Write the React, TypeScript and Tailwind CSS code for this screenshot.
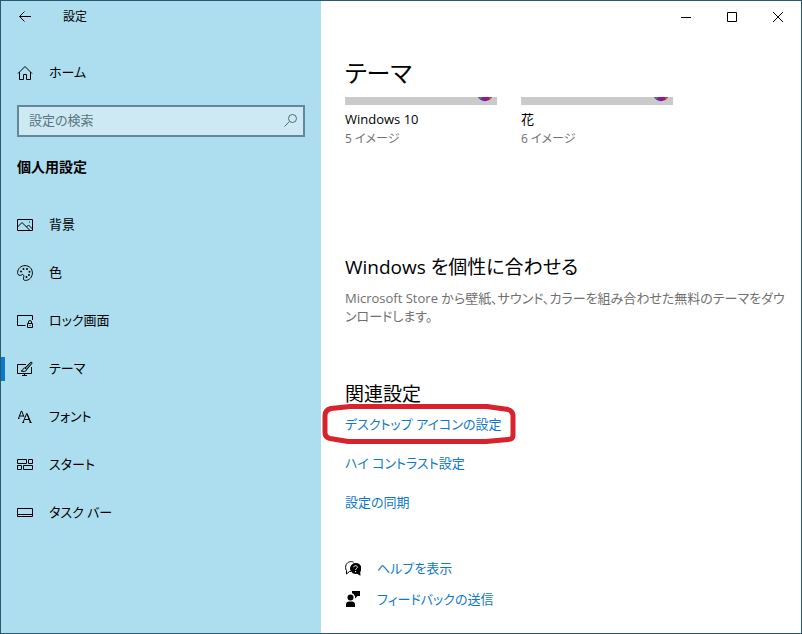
import type { ReactNode } from "react";

type NavItem = { label: string; icon: ReactNode; active?: boolean };

function Icon({ children }: { children: ReactNode }) {
  return (
    <svg
      viewBox="0 0 16 16"
      className="h-4 w-4 shrink-0"
      fill="none"
      stroke="currentColor"
      strokeWidth="1"
      aria-hidden
    >
      {children}
    </svg>
  );
}

const navItems: NavItem[] = [
  {
    label: "背景",
    icon: (
      <Icon>
        <path d="M.5 2.500h15v11H.5zM.5 10l4.500-4.500 7.500 7.500M9.500 10l2-2 4 4" />
        <path d="M12 5h1" />
      </Icon>
    ),
  },
  {
    label: "色",
    icon: (
      <Icon>
        <path d="M.6 7.500C.8 3.500 4 .6 8 .6c4.200 0 7.400 3.100 7.400 7.300S12.300 15.400 8.500 15.400c-1.800 0-2.300-1-1.900-2.500.4-1.700.3-3.100-.8-3.400-.9-.2-1.400.9-2.700.9C1.500 10.400.5 9.300.6 7.500z" />
        <g fill="currentColor" stroke="none">
          <circle cx="4" cy="6.500" r="1" />
          <circle cx="6.500" cy="4" r="1" />
          <circle cx="10" cy="4" r="1" />
          <circle cx="12.500" cy="6.800" r="1" />
          <circle cx="12" cy="10" r="1" />
          <circle cx="9.500" cy="12" r="1" />
        </g>
      </Icon>
    ),
  },
  {
    label: "ロック画面",
    icon: (
      <Icon>
        <path d="M8.500 12.500h-8v-10h15V7" />
        <path d="M10.500 10.500h5v4h-5zM11.500 10.500V9a1.500 1.500 0 0 1 3 0v1.500M13 12v1" />
      </Icon>
    ),
  },
  {
    label: "テーマ",
    active: true,
    icon: (
      <Icon>
        <path d="M9 3.500H.5v9h14V6M7.500 12.500v2M5 14.500h5" />
        <path
          d="M14.700 1.300c.6.500.3 1-.1 1.500L9.800 8.500 8 7l5.300-5.500c.4-.4.9-.6 1.400-.2z"
          fill="currentColor"
          fillOpacity="0.4"
        />
        <path d="M8 7c-1.300-.1-2 .6-2.200 1.600-.1.800-.6 1.200-1.800 1.300 2.500 1 5.500.6 5.800-1.400" />
      </Icon>
    ),
  },
  {
    label: "フォント",
    icon: (
      <Icon>
        <path d="M1.500 9.500 4.300 2h.4l2.300 6M2.500 7h3.500M1 9.500h1.500" />
        <path d="M6 13.500 9.700 4.500h.4l3.700 9M7.500 10.500h5M5.200 13.500h2M12.500 13.500h2.200" />
        <path d="m10.200 5.500 3.200 8" />
      </Icon>
    ),
  },
  {
    label: "スタート",
    icon: (
      <Icon>
        <path d="M.5 2.500h9v4h-9zM11.500 2.500h4v4h-4zM.5 8.500h4v4h-4zM6.500 8.500h9v4h-9z" />
      </Icon>
    ),
  },
  {
    label: "タスク バー",
    icon: (
      <Icon>
        <path d="M.5 3.500h15v8H.5zM.5 9.500h15" />
      </Icon>
    ),
  },
];

const themes = [
  { name: "Windows 10", count: "5 イメージ" },
  { name: "花", count: "6 イメージ" },
];

function Sidebar() {
  return (
    <aside className="flex w-80 shrink-0 flex-col bg-[#addeef]">
      <div className="flex h-8 items-center pl-4">
        <button type="button" aria-label="戻る" className="flex w-4 justify-center">
          <Icon>
            <path d="M14 7.500H2.500M7.500 2.500l-5 5 5 5" />
          </Icon>
        </button>
        <span className="ml-[30px] text-xs">設定</span>
      </div>

      <a href="#home" className="mt-4 flex h-12 items-center gap-4 pl-4 text-[13px]">
        <Icon>
          <path d="M1 8.500 8 1.500l7 7M2.500 7v7.500h4v-5h3v5h4V7" />
        </Icon>
        ホーム
      </a>

      <div className="mx-4 mt-2 flex h-8 items-center border-2 border-[#66879a] bg-[#cde9f4] pr-1 pl-2.5">
        <input
          type="search"
          aria-label="設定の検索"
          placeholder="設定の検索"
          className="min-w-0 flex-1 bg-transparent text-[13px] outline-none placeholder:text-[#5c747e]"
        />
        <button type="button" aria-label="検索" className="text-[#4f6b78]">
          <Icon>
            <circle cx="9.500" cy="5.500" r="4" />
            <path d="m6.500 8.500-5 5" />
          </Icon>
        </button>
      </div>

      <h2 className="mt-5 pl-4 text-sm leading-5 font-bold">個人用設定</h2>

      <nav className="mt-6">
        {navItems.map((item) => (
          <a
            key={item.label}
            href="#"
            aria-current={item.active ? "page" : undefined}
            className="flex h-12 items-center text-[13px]"
          >
            <span className={item.active ? "h-6 w-1 bg-[#0b78c9]" : "h-6 w-1"} />
            <span className="ml-3">{item.icon}</span>
            <span className="ml-4">{item.label}</span>
          </a>
        ))}
      </nav>
    </aside>
  );
}

function WindowButtons() {
  return (
    <div className="flex h-8 justify-end">
      <button type="button" aria-label="最小化" className="flex w-[46px] items-center justify-center">
        <Icon>
          <path d="M3 8.500h10" />
        </Icon>
      </button>
      <button type="button" aria-label="最大化" className="flex w-[46px] items-center justify-center">
        <Icon>
          <path d="M3.500 3.500h9v9h-9z" />
        </Icon>
      </button>
      <button type="button" aria-label="閉じる" className="flex w-[46px] items-center justify-center">
        <Icon>
          <path d="m3 3 10 10M13 3 3 13" />
        </Icon>
      </button>
    </div>
  );
}

function ThemeCard({ name, count }: { name: string; count: string }) {
  return (
    <div className="w-[152px]">
      <div className="flex h-2 justify-end bg-[#cacaca] pr-1">
        <svg viewBox="0 0 16 8" className="h-2 w-4" aria-hidden>
          <path d="M1 0h14a8 8 0 0 1-14 0z" fill="#8c1a96" />
          <path d="M1 0h4l-1 3A8 8 0 0 1 1 0z" fill="#2f74c8" />
          <path d="M12 0h3a8 8 0 0 1-3 3z" fill="#d2452f" />
        </svg>
      </div>
      <p className="mt-1 text-[13px] leading-5">{name}</p>
      <p className="text-xs leading-5 text-[#707070]">{count}</p>
    </div>
  );
}

function HighlightRing() {
  return (
    <svg
      viewBox="0 0 196 42"
      className="pointer-events-none absolute -top-[11px] -left-6 h-[42px] w-[196px]"
      fill="none"
      stroke="#d8232d"
      strokeWidth="5"
      strokeLinejoin="round"
      aria-hidden
    >
      <path d="M29 3.500h137l21 3c3 1 5 3 5 6v20c0 3-2 4-5 4l-22 2H27l-18-3c-4-1-5-3-5-6v-17c0-4 2-6 6-7z" />
    </svg>
  );
}

function Content() {
  return (
    <main className="min-w-0 flex-1 bg-white">
      <WindowButtons />
      <div className="pr-3 pl-6">
        <h1 className="mt-5 text-2xl leading-10">テーマ</h1>
        <div className="mt-1 flex gap-6">
          {themes.map((theme) => (
            <ThemeCard key={theme.name} {...theme} />
          ))}
        </div>

        <section className="mt-26">
          <h2 className="text-[19px] leading-7">Windows を個性に合わせる</h2>
          <p className="mt-2 text-[13px] leading-[18px] text-[#707070]">
            Microsoft Store から壁紙、サウンド、カラーを組み合わせた無料のテーマをダウンロードします。
          </p>
        </section>

        <section className="mt-[55px]">
          <h2 className="text-[19px] leading-7">関連設定</h2>
          <ul className="mt-1.5 flex flex-col gap-[19px] text-[13px] leading-5 text-[#0f78c8]">
            <li className="relative">
              <a href="#">デスクトップ アイコンの設定</a>
              <HighlightRing />
            </li>
            <li>
              <a href="#">ハイ コントラスト設定</a>
            </li>
            <li>
              <a href="#">設定の同期</a>
            </li>
          </ul>
        </section>

        <div className="mt-[46px] mb-6 flex flex-col gap-[11px] text-[13px] leading-5">
          <a href="#" className="flex items-center gap-4 text-[#0f78c8]">
            <span className="text-black">
              <Icon>
                <path d="M6 11.500H4.500L1.500 14v-3.500C.4 9 .3 6.500 1.200 4.500 2.500 2 6 .8 8.500 2.200" />
                <path
                  d="M10.500 3a5.500 5.500 0 1 0 1.500 10.800l3.500 2-.3-3.800A5.500 5.500 0 0 0 10.500 3z"
                  fill="currentColor"
                  stroke="none"
                />
                <path d="M8.800 7.300c0-2.300 3.500-2.200 3.500 0 0 1.200-1.700 1.200-1.700 2.700M10.600 11v1.200" stroke="#fff" />
              </Icon>
            </span>
            ヘルプを表示
          </a>
          <a href="#" className="flex items-center gap-4 text-[#0f78c8]">
            <span className="text-black">
              <Icon>
                <g fill="currentColor" stroke="none">
                  <circle cx="5.500" cy="6.500" r="3" />
                  <path d="M1 16v-2.500C1 11.500 2.500 10.500 4 10.500h3c1.700 0 3 1 3 3V16zM7 0h8v5h-2.500L10 7.500V5H9.500C9.300 3.500 8.500 2.700 7 2.300z" />
                </g>
              </Icon>
            </span>
            フィードバックの送信
          </a>
        </div>
      </div>
    </main>
  );
}

export default function App() {
  return (
    <div className="flex min-h-screen border border-[#265a70] font-['Open_Sans','Noto_Sans_CJK_JP',sans-serif] text-black [font-feature-settings:'palt']">
      <Sidebar />
      <Content />
    </div>
  );
}
